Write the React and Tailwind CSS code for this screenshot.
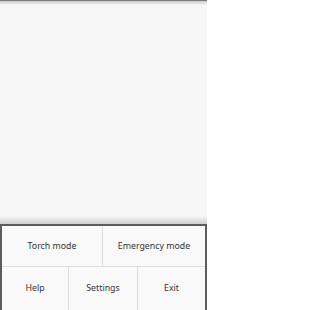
export default function App() {
  const font = { fontFamily: '"Noto Sans", "Open Sans", sans-serif' };
  return (
    <div className="w-[207px] h-[310px] bg-[#f7f7f7] flex flex-col overflow-hidden" style={font}>
      <div className="h-[1px] bg-[#7a7a7a]" />
      <div className="h-[4px] bg-gradient-to-b from-[#c8c8c8] to-[#f7f7f7]" />
      <div className="flex-1" />
      <div className="h-[8px] bg-gradient-to-b from-[#f7f7f7] to-[#cfcfcf]" />
      <div className="h-[86px] border-t-[2px] border-l-[2px] border-r-[2px] border-[#5c5c5c] bg-[#f9f9f9] flex flex-col text-[8.8px] text-[#333]">
        <div className="h-[41px] flex border-b border-[#dcdcdc] pt-[2px]">
          <div className="w-[101px] flex items-center justify-center border-r border-[#dcdcdc] -mt-[2px] pt-[2px]">Torch mode</div>
          <div className="flex-1 flex items-center justify-center">Emergency mode</div>
        </div>
        <div className="flex-1 flex">
          <div className="w-[67px] flex items-center justify-center border-r border-[#dcdcdc] pt-[1px]">Help</div>
          <div className="w-[69px] flex items-center justify-center border-r border-[#dcdcdc] pt-[1px]">Settings</div>
          <div className="flex-1 flex items-center justify-center pt-[1px]">Exit</div>
        </div>
      </div>
    </div>
  );
}
